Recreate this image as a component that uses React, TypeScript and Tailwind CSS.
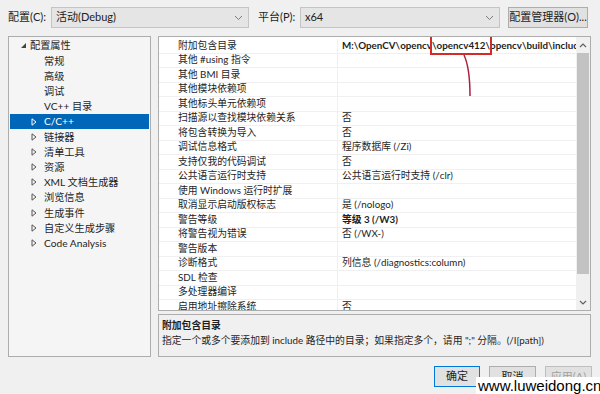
import React from 'react';

const font = { fontFamily: 'Lato, "Noto Sans CJK SC", sans-serif' };

const treeItems = [
    { label: '配置属性', level: 0, expanded: true },
    { label: '常规', level: 1 },
    { label: '高级', level: 1 },
    { label: '调试', level: 1 },
    { label: 'VC++ 目录', level: 1 },
    { label: 'C/C++', level: 1, collapsed: true, selected: true },
    { label: '链接器', level: 1, collapsed: true },
    { label: '清单工具', level: 1, collapsed: true },
    { label: '资源', level: 1, collapsed: true },
    { label: 'XML 文档生成器', level: 1, collapsed: true },
    { label: '浏览信息', level: 1, collapsed: true },
    { label: '生成事件', level: 1, collapsed: true },
    { label: '自定义生成步骤', level: 1, collapsed: true },
    { label: 'Code Analysis', level: 1, collapsed: true },
];

const props: { name: string; value?: string; bold?: boolean }[] = [
    { name: '附加包含目录', bold: true },
    { name: '其他 #using 指令' },
    { name: '其他 BMI 目录' },
    { name: '其他模块依赖项' },
    { name: '其他标头单元依赖项' },
    { name: '扫描源以查找模块依赖关系', value: '否' },
    { name: '将包含转换为导入', value: '否' },
    { name: '调试信息格式', value: '程序数据库 (/Zi)' },
    { name: '支持仅我的代码调试', value: '否' },
    { name: '公共语言运行时支持', value: '公共语言运行时支持 (/clr)' },
    { name: '使用 Windows 运行时扩展' },
    { name: '取消显示启动版权标志', value: '是 (/nologo)' },
    { name: '警告等级', value: '等级 3 (/W3)', bold: true },
    { name: '将警告视为错误', value: '否 (/WX-)' },
    { name: '警告版本' },
    { name: '诊断格式', value: '列信息 (/diagnostics:column)' },
    { name: 'SDL 检查' },
    { name: '多处理器编译' },
    { name: '启用地址擦除系统', value: '否' },
];

function Chevron() {
    return (
        <svg width="9" height="6" viewBox="0 0 9 6" className="shrink-0">
            <path d="M1 1 L4.5 4.5 L8 1" fill="none" stroke="#7a7a7a" strokeWidth="1" />
        </svg>
    );
}

function Combo({ text, width }: { text: string; width: string }) {
    return (
        <div className={`${width} h-[21px] bg-[#e5e5e5] border border-[#c4c4c4] flex items-center justify-between pl-[4px] pr-[5px]`}>
            <span className="text-[11px] text-[#222]">{text}</span>
            <Chevron />
        </div>
    );
}

function Triangle({ filled, selected }: { filled?: boolean; selected?: boolean }) {
    if (filled) {
        return (
            <svg width="7" height="7" viewBox="0 0 7 7">
                <path d="M6 1 L6 6 L1 6 Z" fill="#444" />
            </svg>
        );
    }
    return (
        <svg width="6" height="8" viewBox="0 0 6 8">
            <path d="M1 0.8 L5 4 L1 7.2 Z" fill="none" stroke={selected ? '#ffffff' : '#555'} strokeWidth="1" />
        </svg>
    );
}

// the path value, with the red annotation drawn round the "\opencv412\" part
function IncludePath() {
    return (
        <span>
            M:\OpenCV\opencv
            <span className="relative">
                \opencv412\
                <span className="absolute -left-[2px] -right-[2px] -top-[7px] h-[23px] border-2 border-[#d42a2a]" />
                <svg className="absolute left-[28px] top-[15px] overflow-visible" width="12" height="44" viewBox="0 0 12 44">
                    <path d="M4 1 Q 10 14 10 42" fill="none" stroke="#a8233d" strokeWidth="1.5" />
                </svg>
            </span>
            opencv\build\include
        </span>
    );
}

export default function App() {
    return (
        <div className="w-[600px] h-[394px] bg-[#f0f0f0] relative overflow-hidden text-[#1e1e1e]" style={font}>
            {/* top row */}
            <div className="flex items-center pt-[7px] pl-[8px] h-[28px]">
                <span className="text-[11px] w-[43px]">配置(C):</span>
                <Combo text="活动(Debug)" width="w-[198px]" />
                <span className="text-[11px] ml-[9px] w-[42px]">平台(P):</span>
                <Combo text="x64" width="w-[200px]" />
                <div className="ml-[8px] w-[80px] h-[21px] bg-[#e1e1e1] border border-[#adadad] flex items-center justify-center text-[11px] whitespace-nowrap">
                    配置管理器(O)...
                </div>
            </div>

            {/* main */}
            <div className="flex mt-[8px] pl-[8px]">
                {/* tree */}
                <div className="w-[143px] h-[321px] bg-[#f5f5f5] border border-[#adadad] pt-[1px] px-[1px]">
                    {treeItems.map((it) => (
                        <div
                            key={it.label}
                            className={`h-[15.2px] flex items-center text-[10.2px] leading-none whitespace-nowrap ${it.selected ? 'bg-[#0066b8] text-white' : ''}`}
                        >
                            <div className={`flex justify-center ${it.level === 0 ? 'w-[20px] pl-[6px]' : 'w-[34px] pl-[14px]'}`}>
                                {it.expanded ? <Triangle filled /> : it.collapsed ? <Triangle selected={it.selected} /> : null}
                            </div>
                            <span>{it.label}</span>
                        </div>
                    ))}
                </div>

                {/* right column */}
                <div className="ml-[7px] w-[433px] flex flex-col gap-[3px]">
                    <div className="h-[275px] bg-white border border-[#adadad] flex relative">
                        <div className="flex-1 pt-[2px] overflow-hidden">
                            {props.map((p, i) => (
                                <div key={p.name} className="h-[14.5px] flex text-[9.8px] leading-none border-b border-[#f0f0f0]">
                                    <div className="w-[179px] shrink-0 pl-[19px] flex items-center whitespace-nowrap border-r border-[#f0f0f0]">
                                        {p.name}
                                    </div>
                                    <div className={`flex-1 pl-[4px] flex items-center whitespace-nowrap ${i === 0 ? 'overflow-visible' : 'overflow-hidden'} ${p.bold ? 'font-bold' : ''}`}>
                                        {i === 0 ? <IncludePath /> : p.value ?? ''}
                                    </div>
                                </div>
                            ))}
                        </div>
                        {/* scrollbar */}
                        <div className="w-[14px] bg-[#f0f0f0] flex flex-col items-center relative z-10">
                            <div className="h-[16px] flex items-center justify-center bg-[#f0f0f0] w-full">
                                <svg width="8" height="5" viewBox="0 0 8 5">
                                    <path d="M1 4 L4 1 L7 4" fill="none" stroke="#606060" strokeWidth="1.2" />
                                </svg>
                            </div>
                            <div className="w-[12px] h-[221px] bg-[#c2c2c2]" />
                            <div className="flex-1" />
                            <div className="h-[16px] flex items-center justify-center">
                                <svg width="8" height="5" viewBox="0 0 8 5">
                                    <path d="M1 1 L4 4 L7 1" fill="none" stroke="#606060" strokeWidth="1.2" />
                                </svg>
                            </div>
                        </div>
                    </div>

                    {/* description */}
                    <div className="h-[43px] bg-[#f0f0f0] border border-[#adadad] px-[3px] pt-[3px] text-[9.8px] leading-[15px] whitespace-nowrap">
                        <div className="font-bold">附加包含目录</div>
                        <div>指定一个或多个要添加到 include 路径中的目录；如果指定多个，请用 ";" 分隔。(/I[path])</div>
                    </div>
                </div>
            </div>

            {/* bottom buttons */}
            <div className="flex justify-end gap-[9px] pr-[8px] mt-[9px]">
                <div className="w-[46px] h-[21px] bg-[#e1e1e1] border border-[#0078d7] flex items-center justify-center text-[11px]">确定</div>
                <div className="w-[47px] h-[21px] bg-[#e1e1e1] border border-[#adadad] flex items-start pt-[2px] justify-center text-[11px]">取消</div>
                <div className="w-[47px] h-[21px] bg-[#e1e1e1] border border-[#bfbfbf] flex items-start pt-[2px] justify-center text-[11px] text-[#a0a0a0]">应用(A)</div>
            </div>

            {/* watermark */}
            <div
                className="absolute left-[476px] top-[377px] h-[17px] pl-[2px] pr-[3px] bg-white text-[15px] leading-[17px] text-black"
                style={{ fontFamily: '"Liberation Sans", sans-serif' }}
            >
                www.luweidong.cn
            </div>
        </div>
    );
}
